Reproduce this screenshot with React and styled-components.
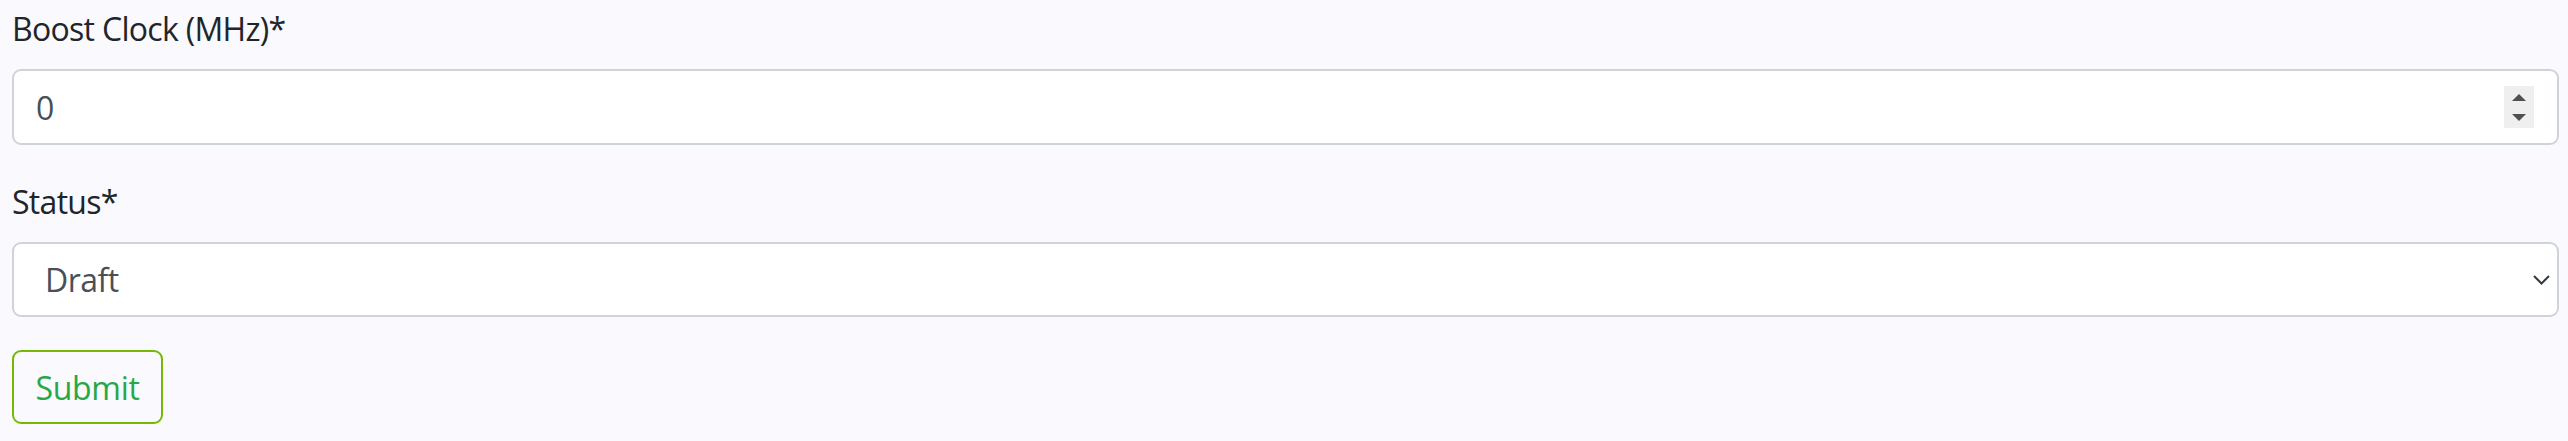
import React from 'react';
import styled, { createGlobalStyle } from 'styled-components';

const GlobalStyle = createGlobalStyle`
    html, body {
        margin: 0;
        padding: 0;
        background: #f9f9fe;
    }
    body {
        font-family: "Open Sans", "Noto Sans", sans-serif;
        color: #212529;
    }
`

const Form = styled.form`
    padding: 5px 9px 0 12px;
    display: flex;
    flex-direction: column;
    align-items: stretch;
`

const Group = styled.div`
    margin-bottom: 33px;
`

const Label = styled.label`
    display: block;
    font-size: 32px;
    line-height: 48px;
    letter-spacing: -0.7px;
    margin-bottom: 16px;
    color: #212529;
`

const Field = styled.div`
    display: flex;
    align-items: center;
    height: ${props => props.$height || 75}px;
    box-sizing: border-box;
    background: #fff;
    border: 2px solid #cfd3da;
    border-radius: 9px;
    padding-right: ${props => props.$padRight || 0}px;
`

const NumberInput = styled.input`
    flex: 1;
    min-width: 0;
    border: none;
    outline: none;
    background: transparent;
    font-family: inherit;
    font-size: 32px;
    color: #495057;
    padding: 0 0 0 22px;

    &::-webkit-outer-spin-button,
    &::-webkit-inner-spin-button {
        -webkit-appearance: none;
        margin: 0;
    }
`

const Spinner = styled.div`
    width: 30px;
    height: 42px;
    background: #efefef;
    display: flex;
    flex-direction: column;
    align-items: center;
    justify-content: center;
    gap: 13px;
`

const Select = styled.select`
    flex: 1;
    min-width: 0;
    height: 100%;
    border: none;
    outline: none;
    background: transparent;
    appearance: none;
    -webkit-appearance: none;
    font-family: inherit;
    font-size: 32px;
    letter-spacing: -0.5px;
    color: #495057;
    padding: 0 0 0 31px;
`

const Chevron = styled.svg`
    flex: none;
    pointer-events: none;
`

const SubmitButton = styled.button`
    align-self: flex-start;
    height: 74px;
    width: 151px;
    box-sizing: border-box;
    padding: 0;
    background: transparent;
    border: 2px solid #76b900;
    border-radius: 9px;
    font-family: inherit;
    font-size: 32px;
    letter-spacing: -0.3px;
    color: #28a745;
    cursor: pointer;
`

const App = () => {
    return (
        <>
            <GlobalStyle />
            <Form onSubmit={e => e.preventDefault()}>
                <Group>
                    <Label htmlFor="boost">Boost Clock (MHz)*</Label>
                    <Field $height={76} $padRight={23}>
                        <NumberInput id="boost" type="number" defaultValue="0" />
                        <Spinner>
                            <svg width="14" height="7" viewBox="0 0 14 7">
                                <polygon points="7,0 14,7 0,7" fill="#505050" />
                            </svg>
                            <svg width="14" height="7" viewBox="0 0 14 7">
                                <polygon points="0,0 14,0 7,7" fill="#505050" />
                            </svg>
                        </Spinner>
                    </Field>
                </Group>
                <Group>
                    <Label htmlFor="status">Status*</Label>
                    <Field $height={75} $padRight={7}>
                        <Select id="status" defaultValue="draft">
                            <option value="draft">Draft</option>
                            <option value="published">Published</option>
                        </Select>
                        <Chevron width="17" height="10" viewBox="0 0 17 10">
                            <polyline points="1,1 8.5,8.5 16,1" fill="none" stroke="#343a40" strokeWidth="2" />
                        </Chevron>
                    </Field>
                </Group>
                <SubmitButton type="submit">Submit</SubmitButton>
            </Form>
        </>
    );
}

export default App;
